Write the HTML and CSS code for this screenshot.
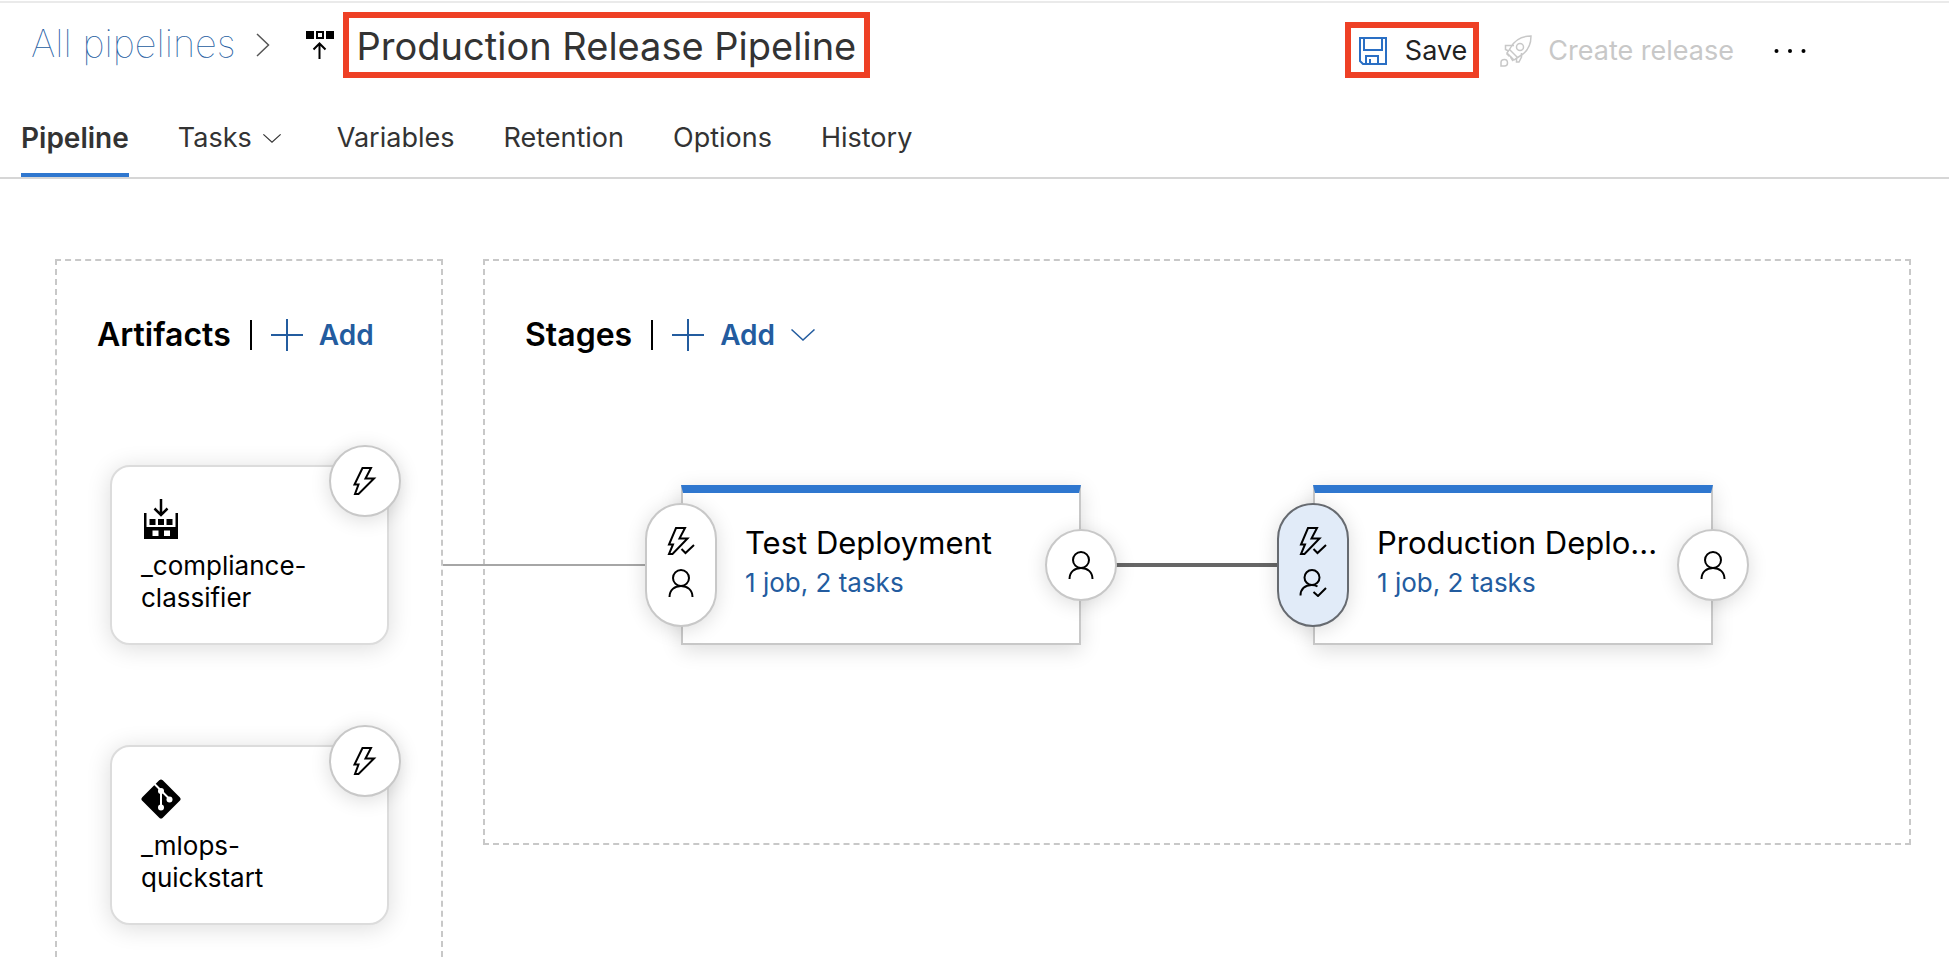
FILE: index.html
```html
<!DOCTYPE html>
<html lang="en">
<head>
<meta charset="utf-8">
<title>Production Release Pipeline</title>
<link rel="stylesheet" href="styles.css">
</head>
<body>
<svg class="sprite" aria-hidden="true">
  <symbol id="bolt" viewBox="0 0 28 28">
    <path d="M11.500 1H20L14.500 11.500H23L7.500 27H4L7.500 17.500H3.500Z" fill="none" stroke="currentColor" stroke-width="2"/>
  </symbol>
  <symbol id="bolt-check" viewBox="0 0 28 28">
    <path d="M9 1H18L12.500 11.500H20.500L5.500 27H2L6 17.500H2Z" fill="none" stroke="currentColor" stroke-width="2"/>
    <path d="M14.500 22L18.500 26L27 18" fill="none" stroke="currentColor" stroke-width="2"/>
  </symbol>
  <symbol id="person" viewBox="0 0 28 28">
    <circle cx="14" cy="9" r="8" fill="none" stroke="currentColor" stroke-width="2"/>
    <path d="M2.500 28C2.500 21 7.500 17 14 17S25.500 21 25.500 28" fill="none" stroke="currentColor" stroke-width="2"/>
  </symbol>
  <symbol id="person-check" viewBox="0 0 28 28">
    <circle cx="13" cy="8.500" r="7.500" fill="none" stroke="currentColor" stroke-width="2"/>
    <path d="M1.500 26.500C1.500 20 6 16 12.500 16C15 16 17 16.500 18.500 17.500" fill="none" stroke="currentColor" stroke-width="2"/>
    <path d="M14.500 23L19 27L27 19" fill="none" stroke="currentColor" stroke-width="2"/>
  </symbol>
  <symbol id="plus" viewBox="0 0 32 32">
    <path d="M16 0V32M0 16H32" fill="none" stroke="currentColor" stroke-width="2"/>
  </symbol>
  <symbol id="chevron" viewBox="0 0 24 12">
    <path d="M.5 .5L12 11L23.500 .5" fill="none" stroke="currentColor" stroke-width="1.500"/>
  </symbol>
</svg>

<header class="header">
  <nav class="breadcrumb" aria-label="Breadcrumb">
    <a class="breadcrumb-link" href="#">All pipelines</a>
    <svg class="breadcrumb-arrow" viewBox="0 0 14 24" aria-hidden="true"><path d="M1 1L12.500 12L1 23" fill="none" stroke="#555" stroke-width="1.500"/></svg>
    <svg class="release-icon" viewBox="0 0 28 28" aria-hidden="true">
      <path d="M0 0H8V8H0ZM20 0H28V8H20Z"/>
      <path d="M11 1H17V7H11Z" fill="none" stroke="#000" stroke-width="2"/>
      <path d="M13.500 28V13M7.500 18.500L13.500 12.500L19.500 18.500" fill="none" stroke="#000" stroke-width="2"/>
    </svg>
    <h1 class="title highlight">Production Release Pipeline</h1>
  </nav>
  <div class="actions">
    <button class="action highlight" type="button">
      <svg class="save-icon" viewBox="0 0 28 28" aria-hidden="true">
        <path d="M1 1H27V27H4L1 24ZM5 1V13H23V1M7 27V19H19V27M11 27V22" fill="none" stroke="#2a6fc4" stroke-width="2"/>
      </svg>
      Save
    </button>
    <button class="action create" type="button" disabled>
      <svg class="rocket-icon" viewBox="0 0 32 32" aria-hidden="true">
        <g fill="none" stroke="currentColor" stroke-width="1.500">
          <path d="M31 1C22 1 15 5 11 12C9.500 14.500 8.500 16 7 18L14 25C16 23.500 17.500 22.500 20 21C27 17 31 10 31 1Z"/>
          <circle cx="20" cy="12" r="3.500"/>
          <path d="M14 10.500H5.500V14.500L8.500 16M21.500 18V22L19 27H16.500V23.500M9.500 14.500L17.500 22.500M6.500 18.500L9.500 21.500M10.500 22L13 26"/>
          <path d="M1 31V27.500C1 25.500 2.500 24.500 4.500 24.500C6.500 24.500 7.500 26 7.500 28C7.500 30 6 31 4.500 31Z"/>
        </g>
      </svg>
      Create release
    </button>
    <button class="action more" type="button" aria-label="More actions">
      <svg class="more-icon" viewBox="0 0 32 6" aria-hidden="true"><circle cx="2.500" cy="3" r="2"/><circle cx="16" cy="3" r="2"/><circle cx="29.500" cy="3" r="2"/></svg>
    </button>
  </div>
</header>

<nav class="tabs" aria-label="Pipeline sections">
  <a class="tab active" href="#" aria-current="page">Pipeline</a>
  <button class="tab tab-menu" type="button">Tasks <svg class="tab-chevron" aria-hidden="true"><use href="#chevron"/></svg></button>
  <a class="tab" href="#">Variables</a>
  <a class="tab" href="#">Retention</a>
  <a class="tab" href="#">Options</a>
  <a class="tab" href="#">History</a>
</nav>

<main class="canvas">
  <section class="panel artifacts">
    <div class="panel-head">
      <h2 class="panel-title">Artifacts</h2>
      <button class="add" type="button"><svg class="plus" aria-hidden="true"><use href="#plus"/></svg>Add</button>
    </div>
    <div class="cards">
      <article class="card">
        <svg class="card-icon" viewBox="0 0 40 40" aria-hidden="true">
          <path d="M3 14H5.500V28H34.500V14H37V40H3Z"/>
          <path d="M8.500 20H14.500V26H8.500ZM17 20H23V26H17ZM25.500 20H31.500V26H25.500Z"/>
          <path d="M11.500 31.500H17.500V37H11.500ZM23 31.500H29V37H23Z" fill="#fff"/>
          <path d="M20 0V16M13.500 9.500L20 16L26.500 9.500" fill="none" stroke="#000" stroke-width="2.500"/>
        </svg>
        <p class="card-name">_compliance-<wbr>classifier</p>
        <button class="badge card-trigger" type="button" aria-label="Continuous deployment trigger"><svg class="glyph"><use href="#bolt"/></svg></button>
      </article>
      <article class="card">
        <svg class="card-icon" viewBox="0 0 40 40" aria-hidden="true">
          <rect x="5.500" y="5.500" width="29" height="29" rx="2.500" transform="rotate(45 20 20)"/>
          <g fill="none" stroke="#fff" stroke-width="2"><path d="M13 4.500L20 11.500V28M20 11.500L29 20.500"/></g>
          <g fill="#fff"><circle cx="20" cy="12" r="3"/><circle cx="20" cy="28.500" r="3"/><circle cx="28.500" cy="20.500" r="3"/></g>
        </svg>
        <p class="card-name">_mlops-<wbr>quickstart</p>
        <button class="badge card-trigger" type="button" aria-label="Continuous deployment trigger"><svg class="glyph"><use href="#bolt"/></svg></button>
      </article>
    </div>
  </section>

  <section class="panel stages">
    <div class="panel-head">
      <h2 class="panel-title">Stages</h2>
      <button class="add" type="button"><svg class="plus" aria-hidden="true"><use href="#plus"/></svg>Add<svg class="add-chevron" aria-hidden="true"><use href="#chevron"/></svg></button>
    </div>
    <div class="flow">
      <span class="link-line thin"></span>
      <article class="stage">
        <button class="badge pre" type="button" aria-label="Pre-deployment conditions"><svg class="glyph"><use href="#bolt-check"/></svg><svg class="glyph"><use href="#person"/></svg></button>
        <h3 class="stage-name">Test Deployment</h3>
        <a class="stage-jobs" href="#">1 job, 2 tasks</a>
        <button class="badge post" type="button" aria-label="Post-deployment conditions"><svg class="glyph"><use href="#person"/></svg></button>
      </article>
      <span class="link-line thick"></span>
      <article class="stage">
        <button class="badge pre selected" type="button" aria-label="Pre-deployment conditions"><svg class="glyph"><use href="#bolt-check"/></svg><svg class="glyph"><use href="#person-check"/></svg></button>
        <h3 class="stage-name">Production Deplo...</h3>
        <a class="stage-jobs" href="#">1 job, 2 tasks</a>
        <button class="badge post" type="button" aria-label="Post-deployment conditions"><svg class="glyph"><use href="#person"/></svg></button>
      </article>
    </div>
  </section>
</main>
</body>
</html>
```
FILE: styles.css
```css
* { box-sizing: border-box; }

body {
  margin: 0;
  padding-top: 1px;
  height: 100vh;
  display: flex;
  flex-direction: column;
  overflow: hidden;
  background: #fff;
  color: #000;
  font-family: Inter, "Liberation Sans", sans-serif;
}

h1, h2, h3, p { margin: 0; font-weight: 400; }
a { color: inherit; text-decoration: none; }
button { margin: 0; padding: 0; border: 0; background: none; color: inherit; font: inherit; }
svg { display: block; flex: none; }
.sprite { position: absolute; width: 0; height: 0; }

/* Header */
.header {
  display: flex;
  align-items: flex-end;
  justify-content: space-between;
  padding: 9px 143px 0 31px;
  border-top: 2px solid #eaeaea;
}
.breadcrumb { display: flex; align-items: center; }
.breadcrumb-link { padding-bottom: 4px; font-size: 38px; line-height: 48px; font-weight: 100; color: #235c9f; }
.breadcrumb-arrow { width: 14px; height: 24px; margin-left: 20px; }
.release-icon { width: 28px; height: 28px; margin: 0 9px 0 36px; }
.highlight { border: 6px solid #ee4025; }
.title { padding: 4px 8px 2px; font-size: 38px; line-height: 48px; color: #333; }
.actions { display: flex; align-items: center; }
.action { display: flex; align-items: center; padding-top: 2px; font-size: 27px; line-height: 42px; color: #222; }
.action.highlight { padding: 2px 6px 0 8px; }
.save-icon { width: 28px; height: 28px; margin-right: 18px; }
.create { margin-left: 21px; color: #c8c8c8; }
.rocket-icon { width: 32px; height: 32px; margin-right: 16px; }
.more { margin-left: 40px; }
.more-icon { width: 32px; height: 6px; }

/* Tabs */
.tabs {
  display: flex;
  gap: 49px;
  margin-top: 29px;
  padding: 0 21px;
  border-bottom: 2px solid #d6d6d6;
}
.tab { display: flex; align-items: center; padding: 11px 0 15px; border-bottom: 4px solid transparent; font-size: 27px; line-height: 40px; color: #333; }
.tab.active { border-color: #2f77cf; font-size: 28px; font-weight: 600; }
.tab-menu { margin-right: 7px; }
.tab-chevron { width: 18px; height: 9px; margin-left: 11px; }

/* Canvas */
.canvas {
  flex: 1;
  min-height: 0;
  display: flex;
  align-items: flex-start;
  gap: 40px;
  padding: 80px 38px 0 55px;
}
.panel { border: 2px dashed #c8c8c8; padding: 50px 40px; }
.artifacts { flex: none; width: 388px; }
.stages { flex: 1; min-width: 0; padding-bottom: 198px; }
.panel-head { display: flex; align-items: center; height: 48px; }
.panel-title {
  display: flex;
  align-items: center;
  font-size: 32px;
  line-height: 48px;
  font-weight: 600;
}
.panel-title::after { content: ""; width: 2px; height: 30px; margin: 0 19px; background: #000; }
.add { display: flex; align-items: center; font-size: 28px; line-height: 40px; font-weight: 600; color: #235c9f; }
.plus { width: 32px; height: 32px; margin-right: 16px; }
.add-chevron { width: 24px; height: 12px; margin-left: 16px; }

/* Round condition buttons sitting on card edges */
.badge {
  position: absolute;
  display: flex;
  flex-direction: column;
  align-items: center;
  justify-content: center;
  gap: 14px;
  width: 72px;
  height: 72px;
  border: 2px solid #c8c8c8;
  border-radius: 36px;
  background: #fff;
  box-shadow: 0 3px 20px rgba(0, 0, 0, .14);
}
.glyph { width: 28px; height: 28px; }

/* Artifact cards */
.cards { display: flex; flex-direction: column; gap: 100px; margin: 106px 12px 0 13px; }
.card {
  position: relative;
  padding: 32px 70px 20px 29px;
  height: 180px;
  border: 2px solid #dcdcdc;
  border-radius: 20px;
  background: #fff;
  box-shadow: 0 3px 24px rgba(0, 0, 0, .14);
}
.card-icon { width: 40px; height: 40px; }
.card-name { margin-top: 11px; font-size: 26px; line-height: 32px; }
.card-trigger { top: -22px; right: -14px; }

/* Stage flow */
.flow { display: flex; align-items: center; margin: 126px 0 0 -82px; }
.link-line { flex: none; width: 232px; height: 4px; background: #666; }
.link-line.thin { width: 238px; height: 2px; background: #a6a6a6; }
.stage {
  position: relative;
  flex: none;
  width: 400px;
  height: 160px;
  padding: 30px 50px 0 62px;
  border: 2px solid #c8c8c8;
  border-top: 8px solid #2f77cf;
  background: #fff;
  box-shadow: 0 5px 20px rgba(0, 0, 0, .14);
}
.stage-name { overflow: hidden; white-space: nowrap; text-overflow: ellipsis; font-size: 31px; line-height: 40px; }
.stage-jobs { display: block; font-size: 26px; line-height: 40px; color: #235c9f; }
.pre { top: 10px; left: -38px; height: 124px; padding-bottom: 6px; }
.post { top: 36px; right: -38px; }
.pre.selected { border-color: #666a70; background: #e1ebf8; }
```
